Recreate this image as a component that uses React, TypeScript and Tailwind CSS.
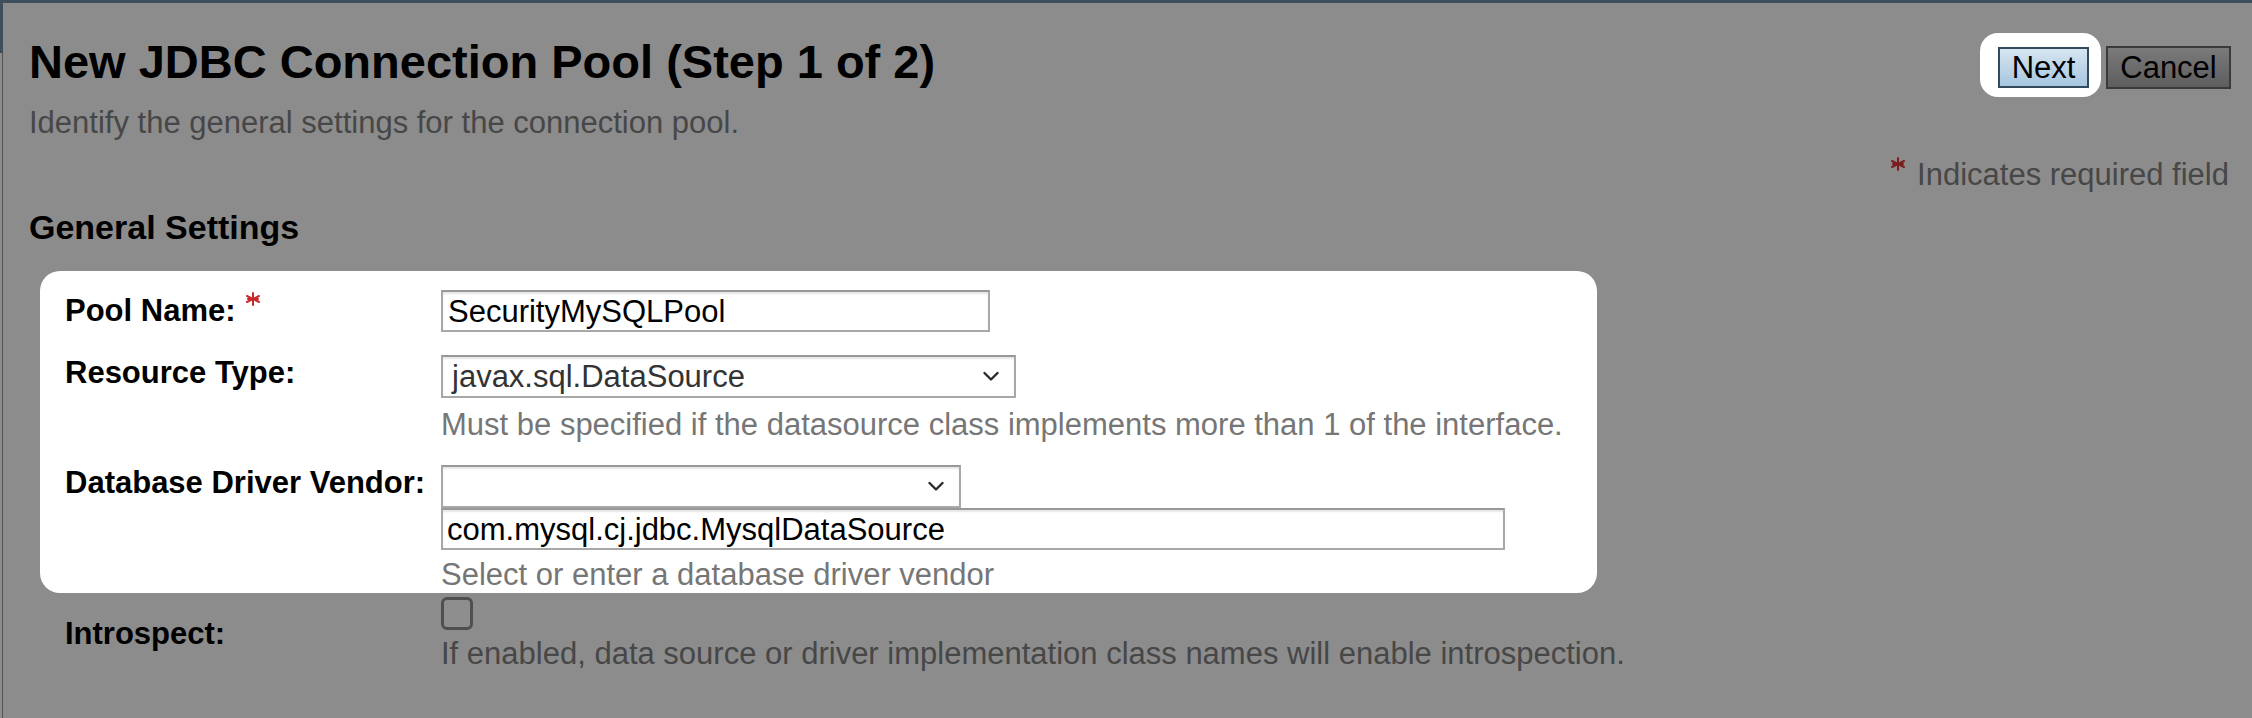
import React from "react";

const Chevron = () => (
  <svg width="16" height="11" viewBox="0 0 16 11" className="shrink-0">
    <path d="M1.5 2 L8 8.5 L14.5 2" fill="none" stroke="#2b2b2b" strokeWidth="2.4" strokeLinecap="round" strokeLinejoin="round" />
  </svg>
);

const RequiredMark = ({ color }: { color: string }) => (
  <svg width="16" height="14" viewBox="0 0 16 14" className="shrink-0">
    <g stroke={color} strokeWidth="2" strokeLinecap="round">
      <line x1="8" y1="1" x2="8" y2="13" />
      <line x1="2" y1="4" x2="14" y2="10" />
      <line x1="2" y1="10" x2="14" y2="4" />
      <line x1="3" y1="7" x2="13" y2="7" />
    </g>
  </svg>
);

const fieldBox =
  "border-2 border-[#a8a8a8] border-t-[#989898] bg-white shadow-[inset_0_2px_2px_rgba(0,0,0,0.10)] flex items-center text-[31px] leading-none";

const App = () => {
  return (
    <div className="w-[2252px] h-[718px] bg-[#8c8c8c] overflow-hidden flex flex-col font-['Liberation_Sans',Arial,sans-serif] text-black">
      <div className="h-[3px] bg-[#3e4e5d] shrink-0" />
      <div className="flex flex-1">
        <div className="w-[3px] flex flex-col shrink-0">
          <div className="h-[50px] bg-[#3e4e5d]" />
          <div className="flex-1 w-[1px] ml-[2px] bg-[#555]" />
        </div>

        <div className="flex-1 pl-[26px]">
          {/* header */}
          <div className="flex justify-between items-start mt-[30px]">
            <div>
              <h1 className="mt-[5px] text-[47px] font-bold leading-none">
                New JDBC Connection Pool (Step 1 of 2)
              </h1>
              <p className="mt-[22px] text-[31px] leading-none text-[#474747]">
                Identify the general settings for the connection pool.
              </p>
            </div>
            <div className="flex flex-col items-end pr-[21px]">
              <div className="flex items-start">
                <div className="bg-white rounded-[18px] pl-[18px] pr-[12px] pt-[14px] pb-[9px]">
                  <button className="w-[91px] h-[41px] border-2 border-[#34495e] bg-gradient-to-b from-[#d7e5f1] to-[#a6c6e0] text-[31px] leading-none flex items-center justify-center">
                    Next
                  </button>
                </div>
                <button className="mt-[13px] ml-[5px] w-[125px] h-[43px] border-2 border-[#3a3a3a] bg-gradient-to-b from-[#7a7a7a] to-[#5e5e5e] text-[31px] leading-none flex items-center justify-center">
                  Cancel
                </button>
              </div>
              <div className="mt-[62px] pr-[2px] flex items-start text-[31px] leading-none text-[#474747]">
                <span className="mt-[-2px] mr-[11px]">
                  <RequiredMark color="#7a1e1e" />
                </span>
                Indicates required field
              </div>
            </div>
          </div>

          <h2 className="mt-[20px] text-[34px] font-bold leading-none">General Settings</h2>

          {/* highlighted block */}
          <div className="mt-[27px] ml-[11px] w-[1557px] h-[322px] bg-white rounded-[20px] pl-[25px] pt-[19px]">
            <div className="flex">
              <div className="w-[376px] text-[31px] font-bold leading-[42px] flex items-start">
                Pool Name:
                <span className="ml-[9px] mt-[2px]">
                  <RequiredMark color="#c62a2a" />
                </span>
              </div>
              <div className={`${fieldBox} w-[549px] h-[42px] pl-[5px]`}>SecurityMySQLPool</div>
            </div>

            <div className="flex mt-[23px]">
              <div className="w-[376px] text-[31px] font-bold leading-[42px] mt-[-3px]">Resource Type:</div>
              <div>
                <div className={`${fieldBox} w-[575px] h-[43px] pl-[9px] pr-[15px] justify-between text-[#333]`}>
                  <span>javax.sql.DataSource</span>
                  <Chevron />
                </div>
                <p className="mt-[11px] text-[31px] leading-none text-[#767676]">
                  Must be specified if the datasource class implements more than 1 of the interface.
                </p>
              </div>
            </div>

            <div className="flex mt-[25px]">
              <div className="w-[376px] text-[31px] font-bold leading-[42px] mt-[-3px]">Database Driver Vendor:</div>
              <div>
                <div className={`${fieldBox} w-[520px] h-[43px] pr-[15px] justify-end`}>
                  <Chevron />
                </div>
                <div className={`${fieldBox} w-[1064px] h-[42px] pl-[4px]`}>com.mysql.cj.jdbc.MysqlDataSource</div>
                <p className="mt-[9px] text-[31px] leading-none text-[#767676]">
                  Select or enter a database driver vendor
                </p>
              </div>
            </div>
          </div>

          {/* introspect row, outside highlight */}
          <div className="flex mt-[4px] ml-[36px]">
            <div className="w-[376px] pt-[21px] text-[31px] font-bold leading-none">Introspect:</div>
            <div>
              <div className="w-[32px] h-[33px] rounded-[6px] border-[3px] border-[#4f4f4f] bg-[#8e8e8e]" />
              <p className="mt-[8px] text-[31px] leading-none text-[#474747]">
                If enabled, data source or driver implementation class names will enable introspection.
              </p>
            </div>
          </div>
        </div>
      </div>
    </div>
  );
};

export default App;
